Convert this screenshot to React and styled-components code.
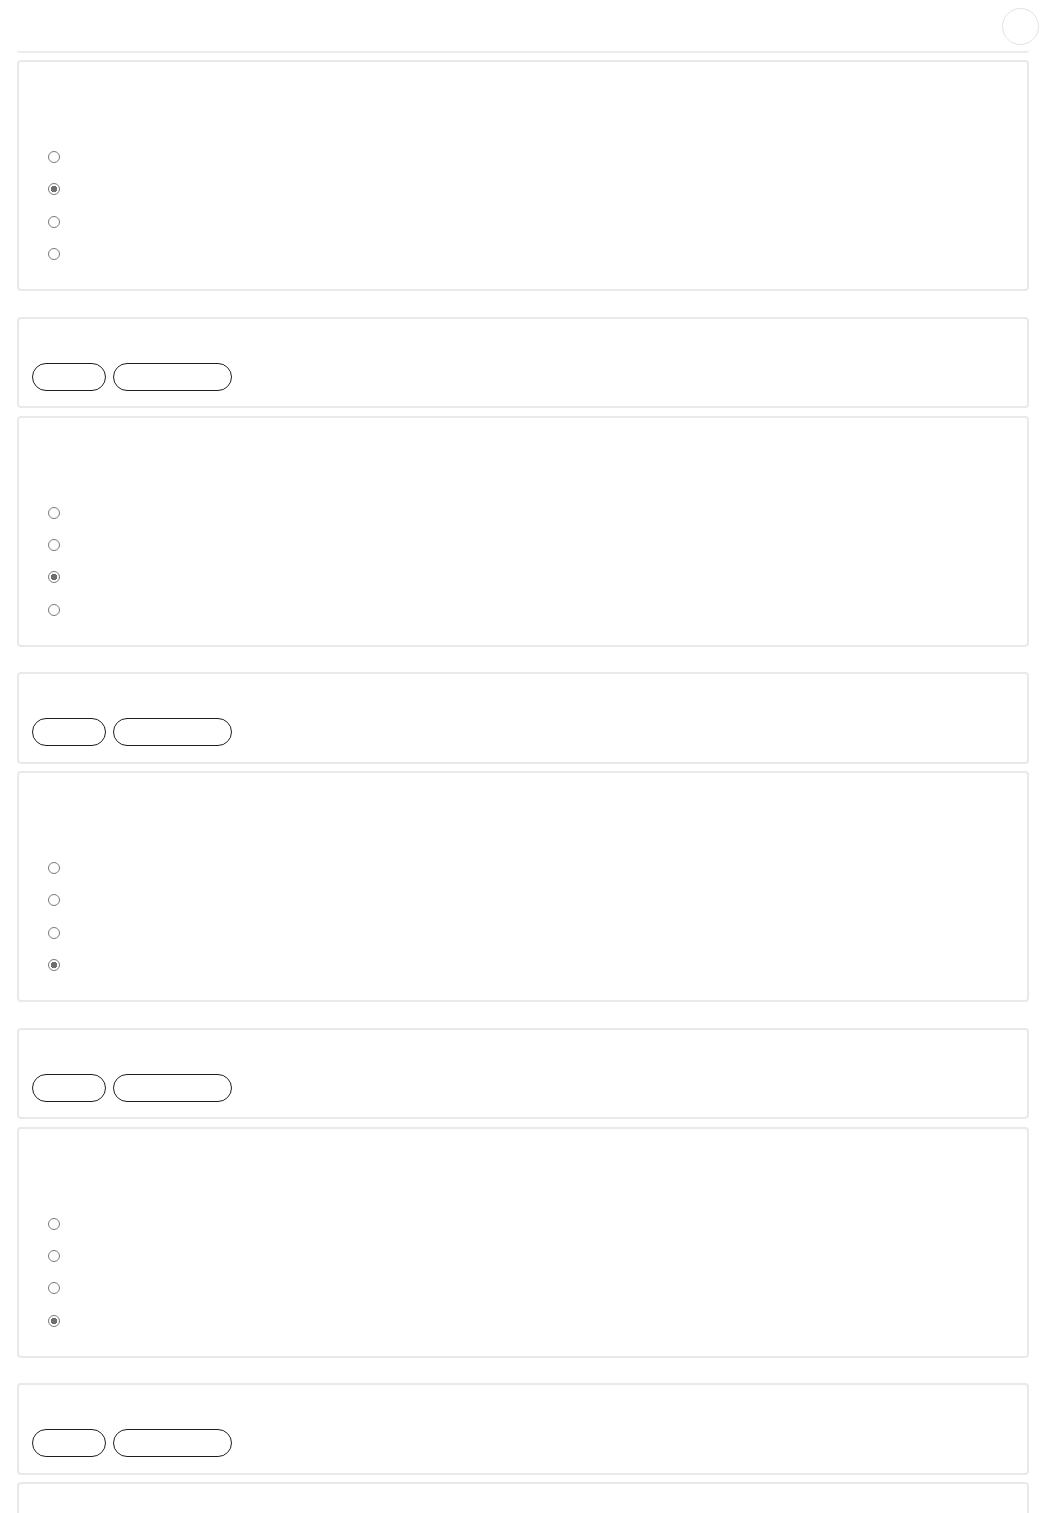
import React from 'react';
import styled, { createGlobalStyle } from 'styled-components';

const GlobalStyle = createGlobalStyle`
  body {
    margin: 0;
    background: #ffffff;
    font-family: "Liberation Sans", Arial, sans-serif;
  }
`;

const Page = styled.div`
  padding: 0 16px 0 17px;
  display: flex;
  flex-direction: column;
`;

const Header = styled.header`
  position: relative;
  height: 51px;
  border-bottom: 2px solid #ebebeb;
  border-radius: 0 0 3px 3px;
  margin-bottom: 7px;
`;

const Avatar = styled.div`
  position: absolute;
  top: 8px;
  right: -10px;
  width: 35px;
  height: 35px;
  border-radius: 50%;
  border: 1px solid #e2e2e2;
  background: #ffffff;
`;

const Card = styled.section`
  border: 2px solid #e9e9e9;
  border-radius: 4px;
  background: #ffffff;
  box-sizing: border-box;
  margin-bottom: ${props => props.$gap}px;
`;

const QuestionCard = styled(Card)`
  height: 231px;
  padding: 0 16px;
`;

const Prompt = styled.h3`
  margin: 0;
  height: 79px;
  padding-top: 16px;
  box-sizing: border-box;
  font-size: 15px;
  font-weight: 600;
  color: #ffffff;
`;

const Options = styled.div`
  display: flex;
  flex-direction: column;
`;

const Option = styled.label`
  display: flex;
  align-items: center;
  height: 32.33px;
  padding-left: 13px;
  gap: 10px;
  font-size: 14px;
  color: #ffffff;
`;

const Radio = styled.span`
  width: 10px;
  height: 10px;
  border-radius: 50%;
  border: 1px solid #7a7a7a;
  background: ${props => props.$checked ? 'radial-gradient(circle, #6f6f6f 0 3px, #ffffff 3.5px)' : '#ffffff'};
  flex-shrink: 0;
`;

const ActionCard = styled(Card)`
  height: 91.5px;
  padding: 0 13px;
  display: flex;
  align-items: flex-end;
`;

const Actions = styled.div`
  display: flex;
  gap: 7px;
  margin-bottom: 15.5px;
`;

const PillButton = styled.button`
  width: ${props => props.$w}px;
  height: 28px;
  border: 1px solid #1e1e1e;
  border-radius: 14px;
  background: #ffffff;
  color: #ffffff;
  font-family: inherit;
  font-size: 13px;
  padding: 0;
`;

const questions = [
  { checked: 1 },
  { checked: 2 },
  { checked: 3 },
  { checked: 3 },
];

export default function App() {
  return (
    <>
      <GlobalStyle />
      <Page>
        <Header>
          <Avatar />
        </Header>
        {questions.map((q, i) => (
          <React.Fragment key={i}>
            <QuestionCard $gap={25.5}>
              <Prompt>Question {i + 1}</Prompt>
              <Options>
                {[0, 1, 2, 3].map(o => (
                  <Option key={o}>
                    <Radio $checked={o === q.checked} />
                    Option {o + 1}
                  </Option>
                ))}
              </Options>
            </QuestionCard>
            <ActionCard $gap={7.5}>
              <Actions>
                <PillButton $w={74}>Back</PillButton>
                <PillButton $w={119}>Next</PillButton>
              </Actions>
            </ActionCard>
          </React.Fragment>
        ))}
        <QuestionCard $gap={26} />
      </Page>
    </>
  );
}
